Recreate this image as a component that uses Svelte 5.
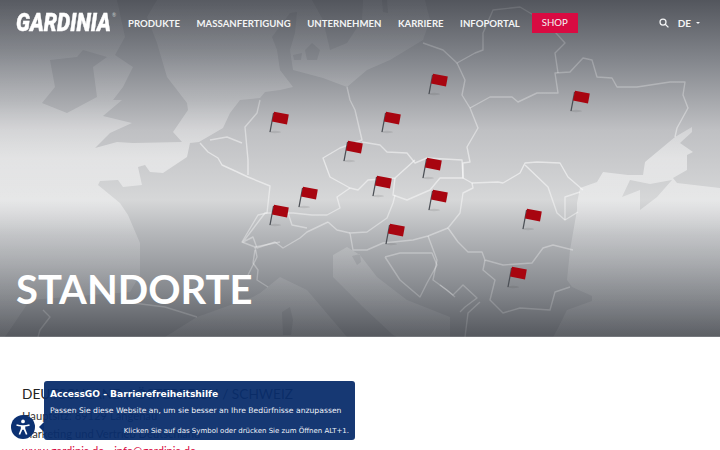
<script>
  const navItems = ["Produkte", "Massanfertigung", "Unternehmen", "Karriere", "Infoportal"];

  // pole foot of each flag on the map
  const flags = [
    [429, 94], [571, 111], [270, 132], [382, 132], [344, 161], [423, 178], [373, 196],
    [299, 207], [429, 210], [270, 225], [523, 229], [386, 244], [508, 287],
  ];

  const land =
    "M5 337L30 300L130 292L140 275L140 243L128 215L120 203L98 185L100 181L118 180L123 187L142 185L138 167L145 165L150 172L163 173L187 157L190 143L199 142L223 128L230 113L240 100L260 98L265 92L280 90L293 87L280 70L277 50L272 37L290 13L297 12L295 33L290 50L293 70L323 78L347 87L367 70L390 60L423 40L430 20L425 0L720 0L720 188L677 183L673 178L687 170L687 155L693 152L680 143L692 132L692 127L675 137L645 162L643 175L628 175L603 172L597 182L580 188L577 203L577 210L570 250L567 280L572 287L592 296L592 301L567 310L557 330L553 337L450 337L450 317L407 300L377 277L360 255L347 247L333 255L333 277L363 307L393 335L397 337L347 337L307 290L280 277L260 293L253 297L197 317L165 337Z";

  const islands = [
    "M117 0L125 37L115 55L133 67L123 87L113 100L122 100L103 116L132 123L110 133L95 148L117 142L133 143L182 142L173 132L188 110L187 103L167 77L157 43L147 17L157 0Z",
    "M83 50L107 57L93 67L97 97L67 113L42 103L55 87L50 60L77 57Z",
    "M312 0L323 20L330 50L347 43L362 20L363 0Z",
    "M382 0L387 0L388 13L383 12Z",
    "M305 50L312 43L320 50L317 60L307 60Z",
    "M293 55L302 53L301 60L294 60Z",
    "M630 180L622 197L640 190L640 210L657 197L672 180L650 184Z",
    "M282 312L290 307L293 320L291 335L283 335Z",
    "M352 256L360 254L361 262L357 265Z",
  ];

  const borders = [
    "200,143 208,152 218,158 222,165 233,170 248,177 270,186 267,213 258,215 242,242 255,247 280,242",
    "255,247 257,257 248,275",
    "260,100 257,113 245,127 248,160 248,175",
    "210,140 227,137 242,143",
    "347,87 350,100 355,110 362,140 340,148 323,158 330,177 350,188 358,190 368,180 395,178 415,160",
    "362,142 380,145 387,152 407,153 415,163 427,158 462,160 463,178 440,178 430,190 407,200 393,195 395,178",
    "350,188 337,197 340,208 327,215 312,215 293,213 265,213 243,242 253,237 257,248 275,242 283,248 300,238 307,232 328,222",
    "288,213 292,225 307,228",
    "423,43 443,50 457,63 475,53 483,50 483,33 493,10 520,7 547,23 565,43 555,53 558,73",
    "457,63 465,80 462,95 470,108 478,128 467,147 470,162 463,163 463,178 472,183 498,182 503,183 520,173 525,163 537,162 560,163 568,177 583,190",
    "470,108 490,97 512,97 518,102 537,93 558,93 555,73 570,72 583,58 592,60 597,77 612,78 617,87 637,87 670,82 685,82 683,95 688,108 677,128 675,137",
    "525,165 548,187 557,213 565,220 578,212",
    "565,220 565,197 580,192",
    "472,183 473,188 463,193 460,213 448,228 458,242 468,252 482,252 485,260 503,265 532,263 543,248 553,245 573,250",
    "485,260 483,270 495,280 490,300 503,313 520,308 550,310 555,292 570,287",
    "460,312 465,307 477,298 463,285 453,295 440,285",
    "480,302 468,313 465,337",
    "448,228 428,236 413,240 383,243 367,250 353,250 350,233 367,232 387,218 393,203 395,195",
    "328,222 337,230 350,233",
    "385,257 400,253 432,253 437,265 427,283 420,297 400,280 387,260 385,257",
    "428,236 437,260 433,280 447,290 455,297",
    "255,250 253,263 258,270 257,280 268,287",
    "133,303 165,307 197,317",
    "43,310 50,317 40,330 38,337",
  ];
</script>

<div class="page">
  <header class="hero">
    <svg class="map" viewBox="0 0 720 337" aria-hidden="true">
      <defs>
        <linearGradient id="seaFill" x1="0" y1="0" x2="0" y2="337" gradientUnits="userSpaceOnUse">
          <stop offset="0" stop-color="#fff" stop-opacity="0.03" />
          <stop offset="0.15" stop-color="#fff" stop-opacity="0.07" />
          <stop offset="0.3" stop-color="#fff" stop-opacity="0.18" />
          <stop offset="0.47" stop-color="#fff" stop-opacity="0.48" />
          <stop offset="0.6" stop-color="#fff" stop-opacity="0.4" />
          <stop offset="0.7" stop-color="#fff" stop-opacity="0.2" />
          <stop offset="0.85" stop-color="#fff" stop-opacity="0.08" />
          <stop offset="1" stop-color="#fff" stop-opacity="0.04" />
        </linearGradient>
        <linearGradient id="lineFill" x1="0" y1="0" x2="0" y2="337" gradientUnits="userSpaceOnUse">
          <stop offset="0" stop-color="#fff" stop-opacity="0.1" />
          <stop offset="0.3" stop-color="#fff" stop-opacity="0.3" />
          <stop offset="0.5" stop-color="#fff" stop-opacity="0.55" />
          <stop offset="0.75" stop-color="#fff" stop-opacity="0.3" />
          <stop offset="1" stop-color="#fff" stop-opacity="0.1" />
        </linearGradient>
      </defs>
      <g class="soft">
        <path
          fill="url(#seaFill)"
          fill-rule="evenodd"
          d="M0 0H720V337H0Z {land} {islands.join(' ')}"
        />
        {#each borders as points}
          <polyline class="border" stroke="url(#lineFill)" {points} />
        {/each}
      </g>
      {#each flags as [x, y]}
        <g transform="translate({x} {y})">
          <ellipse class="shadow" cx="5" cy="0" rx="6" ry="1.2" />
          <path class="pole" d="M0 0L3.6 -19" />
          <path class="cloth" d="M4 -20.2L18.8 -17.6L17 -7.6L2 -10.4Z" />
        </g>
      {/each}
    </svg>

    <nav class="topbar">
      <a class="logo" href="#top"><span class="logo-word">GARDINIA</span><sup>®</sup></a>
      <ul class="menu">
        {#each navItems as item}
          <li>{item}</li>
        {/each}
      </ul>
      <span class="shop">Shop</span>
      <div class="tools">
        <svg class="search" viewBox="0 0 12 12" aria-hidden="true">
          <circle cx="4.8" cy="4.8" r="3.6" />
          <path d="M7.5 7.5L11.3 11.3" />
        </svg>
        <span class="lang">DE</span>
        <span class="caret"></span>
      </div>
    </nav>

    <h1>Standorte</h1>
  </header>

  <main class="content">
    <h2>Deutschland / Österreich / Schweiz</h2>
    <p>Hauptsitz: 89129 Langenau</p>
    <p>Marketing und Vertrieb Deutschland</p>
    <p class="links"><a href="#top">www.gardinia.de</a> - <a href="#top">info@gardinia.de</a></p>
  </main>

  <button class="a11y" aria-label="AccessGO">
    <svg viewBox="0 0 24 24" aria-hidden="true">
      <circle cx="12" cy="4.6" r="2.5" />
      <path d="M3.6 8.2c2.8.9 5.6 1.3 8.4 1.3s5.6-.4 8.4-1.3l.6 2c-2.1.7-4.1 1.1-6 1.2v3l2.9 7.2-2 .8-2.9-6.6h-1.9l-2.9 6.6-2-.8 2.9-7.2v-3c-1.9-.1-3.9-.5-6-1.2z" />
    </svg>
  </button>
  <aside class="tip">
    <strong>AccessGO - Barrierefreiheitshilfe</strong>
    <span class="tip-text">Passen Sie diese Website an, um sie besser an Ihre Bedürfnisse anzupassen</span>
    <span class="tip-hint">Klicken Sie auf das Symbol oder drücken Sie zum Öffnen ALT+1.</span>
  </aside>
</div>

<style>
  :global(body) {
    margin: 0;
    overflow: hidden;
    background: #fff;
  }
  .page {
    position: relative;
    height: 450px;
    overflow: hidden;
    font-family: Lato, "Liberation Sans", sans-serif;
  }
  .hero {
    position: relative;
    height: 337px;
    display: flex;
    flex-direction: column;
    justify-content: space-between;
    background: linear-gradient(
      #53565d 0,
      #83868c 60px,
      #bfc0c3 130px,
      #d6d7d8 200px,
      #b6b8bb 232px,
      #85888d 290px,
      #56595f 336px,
      #8b8d92 337px
    );
  }
  .map {
    position: absolute;
    inset: 0;
    width: 720px;
    height: 337px;
  }
  .soft {
    filter: blur(0.6px);
  }
  .border {
    fill: none;
    stroke-width: 1.4;
    stroke-linejoin: round;
  }
  .shadow {
    fill: rgba(60, 60, 60, 0.12);
  }
  .pole {
    stroke: #4b4f55;
    stroke-width: 1.3;
  }
  .cloth {
    fill: #a80510;
  }
  .topbar {
    position: relative;
    display: flex;
    align-items: center;
    height: 46px;
    padding: 0 20px 0 16px;
    color: #f3f4f5;
  }
  .logo {
    display: flex;
    width: 112px;
    color: #fff;
    text-decoration: none;
  }
  .logo-word {
    display: block;
    width: 96px;
    font: italic 900 25px/24px Roboto, sans-serif;
    -webkit-text-stroke: 0.4px #fff;
    transform: scaleX(0.84);
    transform-origin: left center;
  }
  .logo sup {
    font-size: 5px;
    line-height: 8px;
    color: #c9cbcf;
  }
  .menu {
    display: flex;
    gap: 16.5px;
    margin: 0;
    padding: 0;
    list-style: none;
  }
  .menu li {
    font-size: 9.6px;
    font-weight: 700;
    text-transform: uppercase;
  }
  .shop {
    margin-left: 12px;
    width: 46px;
    height: 20px;
    background: #d90b42;
    font-size: 9.6px;
    line-height: 20px;
    text-align: center;
    text-transform: uppercase;
  }
  .tools {
    display: flex;
    align-items: center;
    margin-left: auto;
  }
  .search {
    width: 10px;
    height: 10px;
    margin-right: 9px;
    fill: none;
    stroke: #f3f4f5;
    stroke-width: 1.5;
  }
  .lang {
    font-size: 10px;
    font-weight: 700;
  }
  .caret {
    margin-left: 5px;
    border: 2.5px solid transparent;
    border-top-color: #f3f4f5;
    border-bottom: 0;
  }
  h1 {
    position: relative;
    margin: 0 0 24px 16px;
    color: #fff;
    font-size: 40px;
    line-height: 48px;
    font-weight: 700;
    text-transform: uppercase;
  }
  .content {
    padding: 47px 22px 0;
    color: #333;
    font-size: 11.2px;
    line-height: 17.5px;
  }
  h2 {
    margin: 0 0 3px;
    color: #222;
    font-size: 13.7px;
    line-height: 20px;
    font-weight: 400;
    text-transform: uppercase;
  }
  .content p {
    margin: 0;
  }
  .links a {
    color: #d90b42;
    text-decoration: none;
  }
  .a11y {
    position: absolute;
    left: 11px;
    top: 415px;
    width: 24px;
    height: 24px;
    padding: 3px;
    border: 0;
    border-radius: 50%;
    background: #0c3172;
  }
  .a11y svg {
    display: block;
    fill: #fff;
  }
  .a11y::after {
    content: "";
    position: absolute;
    left: 28px;
    top: 7px;
    border: 5px solid transparent;
    border-right-color: #0c3172;
    border-left: 0;
  }
  .tip {
    position: absolute;
    left: 44px;
    top: 381px;
    box-sizing: border-box;
    width: 311px;
    height: 59px;
    padding: 6px 6px 0;
    border-radius: 3px;
    background: rgba(9, 45, 108, 0.95);
    color: #eef2f8;
    display: flex;
    flex-direction: column;
    font-family: "DejaVu Sans", sans-serif;
    white-space: nowrap;
  }
  .tip strong {
    font-size: 9.1px;
    line-height: 14px;
    color: #fff;
  }
  .tip-text {
    margin-top: 3px;
    font-size: 7.67px;
    line-height: 14px;
  }
  .tip-hint {
    margin-top: 7px;
    font-size: 7px;
    line-height: 12px;
    text-align: right;
  }
</style>
